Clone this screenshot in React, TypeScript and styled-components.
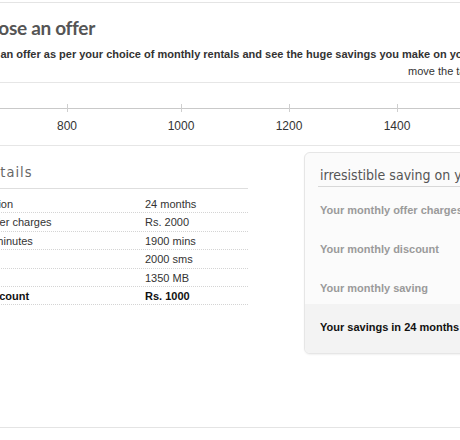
import styled, { createGlobalStyle } from 'styled-components';

const GlobalStyle = createGlobalStyle`
    html, body {
        margin: 0;
        padding: 0;
        background: #ffffff;
        overflow: hidden;
    }
    body {
        width: 460px;
        height: 440px;
        font-family: "Liberation Sans", Arial, sans-serif;
        color: #333;
    }
`;

const Page = styled.div`
    width: 720px;
    margin-left: -54px;
    padding-top: 2px;
`;

const Header = styled.div`
    border-top: 1px solid #e4e4e4;
    border-bottom: 1px solid #e6e6e6;
    padding: 12px 0 0 11px;
    height: 81px;
    box-sizing: border-box;
`;

const Title = styled.h1`
    margin: 0 0 0 8px;
    font-family: Lato, "Open Sans", sans-serif;
    font-size: 19px;
    font-weight: 700;
    letter-spacing: -0.3px;
    color: #555;
    line-height: 26px;
`;

const Lead = styled.p`
    margin: 7px 0 0;
    font-size: 11px;
    font-weight: 700;
    color: #333;
    line-height: 13px;
    white-space: nowrap;
`;

const Hint = styled.p`
    margin: 4px 0 0 451px;
    font-size: 11px;
    line-height: 13px;
    color: #333;
    white-space: nowrap;
`;

const Scale = styled.div`
    position: relative;
    height: 62px;
    border-bottom: 1px solid #e6e6e6;
`;

const Track = styled.div`
    position: absolute;
    left: 0;
    right: 0;
    top: 25px;
    height: 1px;
    background: #c9c9c9;
`;

const Tick = styled.div`
    position: absolute;
    top: 21px;
    width: 1px;
    height: 8px;
    background: #cfcfcf;
`;

const TickLabel = styled.span`
    position: absolute;
    top: 36px;
    transform: translateX(-50%);
    font-size: 12px;
    color: #333;
`;

const Body = styled.div`
    display: flex;
    align-items: flex-start;
    padding-top: 6px;
`;

const Details = styled.div`
    flex: 0 0 302px;
`;

const SectionTitle = styled.h2`
    margin: 0;
    font-family: "DejaVu Sans Condensed", "DejaVu Sans", sans-serif;
    font-size: 14.5px;
    font-weight: 400;
    letter-spacing: 1px;
    text-indent: -7px;
    color: #666;
    line-height: 20px;
    padding: 10px 0 6px;
    border-bottom: 1px solid #dedede;
    white-space: nowrap;
`;

const Table = styled.div`
    margin-top: 6px;
`;

const Row = styled.div<{ $strong?: boolean }>`
    display: grid;
    grid-template-columns: 199px 1fr;
    height: 18.4px;
    line-height: 18px;
    border-bottom: 1px dotted #d4d4d4;
    box-sizing: border-box;
    font-size: 11px;
    font-weight: ${(p) => (p.$strong ? 700 : 400)};
    color: ${(p) => (p.$strong ? '#111' : '#333')};
    white-space: nowrap;
    overflow: hidden;
`;

const Panel = styled.div`
    flex: 0 0 260px;
    margin-left: 56px;
    border: 1px solid #e6e6e6;
    border-radius: 6px;
    background: #fbfbfb;
    box-shadow: 0 1px 2px rgba(0, 0, 0, 0.06);
    overflow: hidden;
`;

const PanelTitle = styled.h3`
    margin: 0 0 0 13px;
    padding: 13px 0 2px 2px;
    font-family: "DejaVu Sans Condensed", "DejaVu Sans", sans-serif;
    font-size: 14px;
    font-weight: 400;
    color: #555;
    line-height: 18px;
    border-bottom: 1px solid #d8d8d8;
    white-space: nowrap;
`;

const PanelRow = styled.div<{ $total?: boolean }>`
    padding: ${(p) => (p.$total ? '16px 15px 19px' : '16px 15px 9px')};
    font-size: 11px;
    line-height: 14px;
    font-weight: 700;
    color: ${(p) => (p.$total ? '#111' : '#9a9a9a')};
    background: ${(p) => (p.$total ? '#f3f3f3' : 'transparent')};
    white-space: nowrap;
`;

const Footer = styled.div`
    margin-top: 73px;
    border-top: 1px solid #e4e4e4;
`;

const ticks = [
    { value: 600, x: -47 },
    { value: 800, x: 121 },
    { value: 1000, x: 235 },
    { value: 1200, x: 343 },
    { value: 1400, x: 451 },
    { value: 1600, x: 559 },
];

const details = [
    { label: 'Offer duration', value: '24 months' },
    { label: 'Monthly offer charges', value: 'Rs. 2000' },
    { label: 'Total free minutes', value: '1900 mins' },
    { label: 'Free SMS', value: '2000 sms' },
    { label: 'Free data', value: '1350 MB' },
    { label: 'Bonus discount', value: 'Rs. 1000', strong: true },
];

const savings = ['Your monthly offer charges', 'Your monthly discount', 'Your monthly saving'];

export default function App() {
    return (
        <>
            <GlobalStyle />
            <Page>
                <Header>
                    <Title>Choose an offer</Title>
                    <Lead>Choose an offer as per your choice of monthly rentals and see the huge savings you make on your plan</Lead>
                    <Hint>move the tab to choose</Hint>
                </Header>
                <Scale>
                    <Track />
                    {ticks.map((t) => (
                        <div key={t.value}>
                            <Tick style={{ left: t.x }} />
                            <TickLabel style={{ left: t.x }}>{t.value}</TickLabel>
                        </div>
                    ))}
                </Scale>
                <Body>
                    <Details>
                        <SectionTitle>Offer details</SectionTitle>
                        <Table>
                            {details.map((d) => (
                                <Row key={d.label} $strong={d.strong}>
                                    <span>{d.label}</span>
                                    <span>{d.value}</span>
                                </Row>
                            ))}
                        </Table>
                    </Details>
                    <Panel>
                        <PanelTitle>irresistible saving on your plan</PanelTitle>
                        {savings.map((s) => (
                            <PanelRow key={s}>{s}</PanelRow>
                        ))}
                        <PanelRow $total>Your savings in 24 months</PanelRow>
                    </Panel>
                </Body>
                <Footer />
            </Page>
        </>
    );
}
